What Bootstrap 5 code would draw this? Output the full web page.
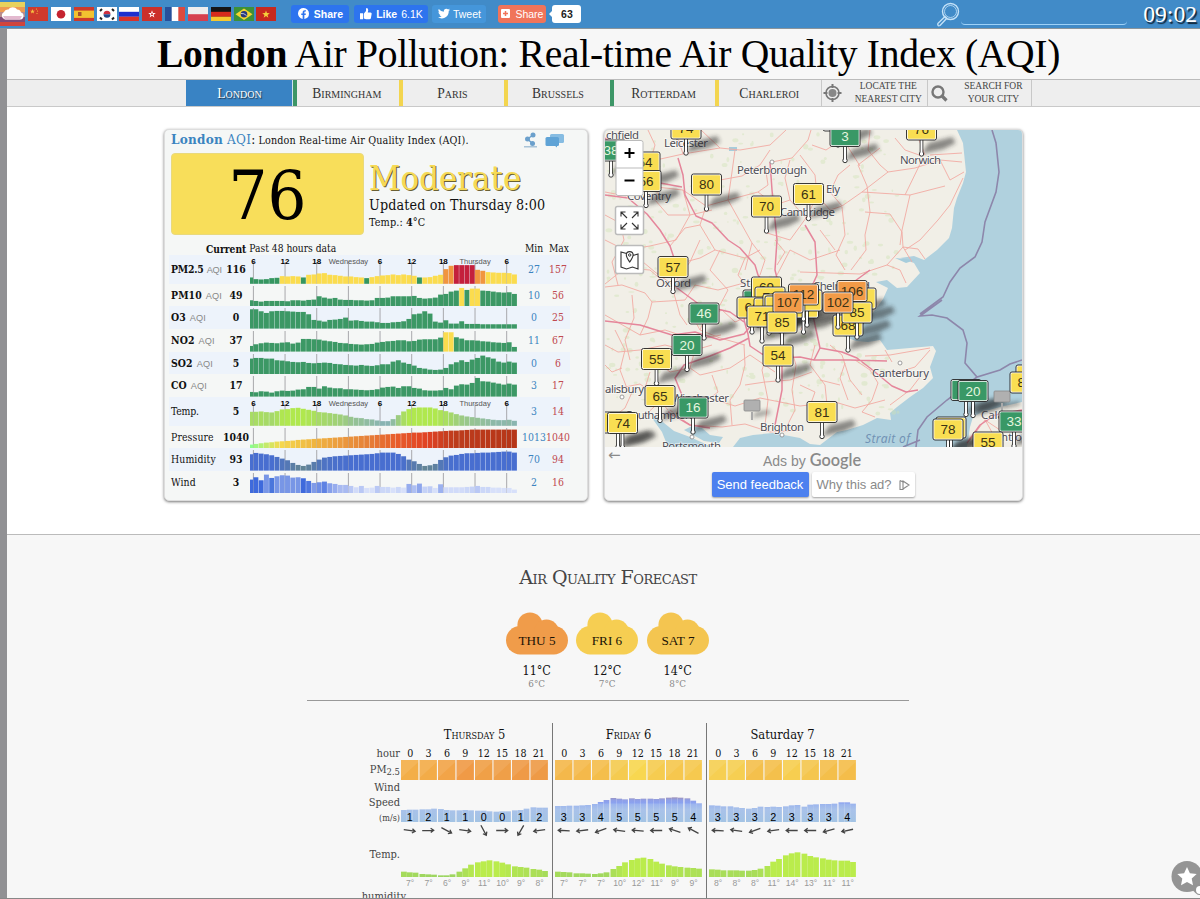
<!DOCTYPE html>
<html lang="en">
<head>
    <meta charset="UTF-8">
    <meta name="viewport" content="width=device-width, initial-scale=1.0">
    <title>London Air Pollution: Real-time Air Quality Index (AQI)</title>
    <!-- Bootstrap CSS -->
    <link href="https://cdn.jsdelivr.net/npm/bootstrap@5.3.0/dist/css/bootstrap.min.css" rel="stylesheet">
    <style>
        body { font-family: "DejaVu Serif Condensed", "DejaVu Serif", serif; font-stretch: condensed; height: 899px; overflow: hidden; background: #f7f7f7; color: #111; line-height: 1.2; font-size: 10px; }
        svg { display: block; flex: none; }
        .sans { font-family: "Liberation Sans", sans-serif; }
        .blue { color: #3b84c0; }
        .red { color: #c04a50; }

        /* top bar */
        .topbar { height: 29px; background: #418bc8; border-bottom: 1px solid #8a949b; }
        .flags { gap: 2.85px; padding-left: 3px; margin-right: 15px; }
        .social { height: 18px; margin-top: -1px; border-radius: 3px; color: #fff; font: 10.5px/18px "Liberation Sans", sans-serif; white-space: nowrap; display: flex; align-items: center; justify-content: center; gap: 4px; }
        .fb { width: 58px; background: #2d74ee; gap: 5px; }
        .fb-like { width: 74px; background: #2d74ee; margin-left: 5px; }
        .tw { width: 54px; background: #4596da; gap: 3px; margin-left: 4px; }
        .addthis { width: 48px; background: #f0745a; gap: 5px; margin-left: 12px; }
        .count63 { width: 29px; background: #fff; color: #222; position: relative; margin-left: 6px; }
        .count63::before { content: ""; position: absolute; left: -3px; top: 6px; border: 3px solid transparent; border-right-color: #fff; border-left: 0; }
        .searchbox { width: 166px; height: 22px; border-bottom: 1.5px solid #9fd2f8; border-radius: 0 0 4px 4px; }
        .clock { font: 23.6px/28px "Liberation Serif", serif; color: #fff; text-shadow: 1.5px 1.5px 1px #123; margin: 0 3px 0 16px; }

        /* title and city tabs */
        .page { border-left: 7px solid #919194; height: 870px; }
        .headline { font: 39.6px/50px "Liberation Serif", serif; letter-spacing: -.31px; color: #000; height: 50px; padding-left: 150px; white-space: nowrap; }
        .tabs { height: 28px; background: #eee; border-top: 1px solid #bbb; border-bottom: 1px solid #c9c9c9; padding-left: 179px; }
        .city { width: 105.6px; font: 13.6px/27px "Liberation Serif", serif; font-variant: small-caps; text-align: center; color: #333; border-left: 4px solid #f3d54f; padding-right: 2px; }
        .city.on { width: 107px; border: 0; border-right: 1px solid #cfe2ee; background: #3983c4; color: #fff; text-shadow: 1px 1px 1px #234; padding-left: 3px; }
        .city.good { border-left-color: #3d9667; }
        .tool { width: 105.6px; border-left: 1px solid #c8c8c8; font: 9.5px/13px "Liberation Serif", serif; color: #444; }
        .tool.last { border-right: 1px solid #c8c8c8; }

        /* city panel */
        .upper { height: 428px; background: #fff; border-bottom: 1px solid #bbb; padding: 22px 0 0 157px; gap: 16px; }
        .panel { height: 372px; border: 1px solid #ddd; border-radius: 5px; background: #f5f7f6; box-shadow: 0 1px 3px rgba(0, 0, 0, .55); overflow: hidden; }
        .aqi { width: 424px; padding: 1px 4px; }
        .aqi-head { height: 18px; padding-left: 2px; white-space: nowrap; }
        .aqi-name { font-size: 13.4px; letter-spacing: .25px; }
        .aqi-full { font-size: 10.7px; letter-spacing: .13px; padding-top: 2px; margin-left: 3px; }
        .chat { margin: 0 18px 0 7px; }
        .score-row { margin-top: 4px; }
        .score { width: 193px; height: 82px; margin-left: 2px; background: #f8de5a; border: 1px solid #e9d97c; border-radius: 4px; font-size: 68px; line-height: 84px; text-align: center; color: #000; }
        .summary { padding: 7px 0 0 5px; white-space: nowrap; }
        .level { font-size: 34px; line-height: 36px; color: #f6da55; text-shadow: 1px 1px 0 #6b6133; letter-spacing: .2px; }
        .updated { font-size: 14.2px; line-height: 18px; letter-spacing: .14px; }
        .now-temp { font-size: 10.8px; line-height: 18px; letter-spacing: .1px; }
        .measure-head { height: 20px; padding: 8px 14px 0 37px; font-size: 10.2px; white-space: nowrap; gap: 3px; }
        .measure { display: grid; grid-template-columns: 53px 28px 267px 5px 24px 24px; width: 401px; height: 22.6px; align-items: center; white-space: nowrap; font-size: 10.4px; }
        .measure.tall { height: 28.8px; }
        .measure:nth-child(odd) { background: #edf3fb; }
        .measure > span, .measure > b { display: flex; justify-content: center; }
        .measure > .what { justify-content: flex-start; padding-left: 2px; gap: 4px; align-items: baseline; letter-spacing: .1px; }
        .tall > .what { letter-spacing: -.2px; gap: 3px; }
        .what i { font: 9.2px "Liberation Sans", sans-serif; color: #888; }

        /* map panel */
        .mapcard { width: 419px; background: #f7f7f7; }
        .ads { height: 25px; line-height: 25px; color: #8a8a8a; font-size: 14px; padding-right: 3px; position: relative; }
        .ads-back { position: absolute; left: 3px; top: -4px; font: 15px/25px "DejaVu Sans", sans-serif; }
        .ads-brand { font: 600 16.3px/25px Lato, sans-serif; }
        .ad-row { gap: 3px; padding-right: 1px; }
        .adbtn { height: 25px; font: 13px/25px "Liberation Sans", sans-serif; border-radius: 2px; box-shadow: 0 1px 2px rgba(0, 0, 0, .35); white-space: nowrap; display: flex; align-items: center; justify-content: center; gap: 7px; }
        .adbtn.go { width: 97px; background: #4c80ef; color: #fff; }
        .adbtn.why { width: 103px; background: #fff; color: #8a8a8a; }

        /* forecast */
        .forecast-title { font: 19px/22px "DejaVu Serif", serif; font-stretch: normal; font-variant: small-caps; color: #444; padding: 31px 0 0 9px; letter-spacing: -.5px; }
        .clouds { gap: 8.5px; padding: 24px 0 0 7.5px; }
        .high { font-size: 12.4px; line-height: 15px; padding-top: 8px; }
        .low { font-size: 9.8px; line-height: 12px; color: #888; }
        .rule { width: 602px; border-top: 1.5px solid #999; margin: 10px 0 0 300px; }
        .days { padding: 22px 0 0 343px; height: 198px; }
        .labels { width: 50px; margin-right: -2.5px; text-align: right; color: #444; font-size: 11px; line-height: 15px; }
        .labels sub { font-size: 9.4px; }
        .label-hour { padding-top: 23px; }
        .label-pm { line-height: 20px; margin-top: -1px; }
        .label-unit { font-size: 9px; }
        .label-temp { padding-top: 20px; line-height: 18px; }
        .label-hum { padding-top: 25px; margin-right: -6px; }
        .day { width: 154px; border-left: 1px solid #777; padding-left: 2.5px; height: 178px; }
        .day:nth-child(2) { border-left-color: transparent; }
        .dayname { width: 147px; font-size: 12.8px; line-height: 23px; text-align: center; }
        .dayname.caps { font-variant: small-caps; }
        .hours { width: 147px; font-size: 10.6px; line-height: 14px; }
        .hours span { width: 18.4px; text-align: center; }
        .star { position: absolute; left: 1170px; top: 860px; }
        .edge { position: absolute; left: 0; top: 898px; width: 1200px; height: 1px; background: #888; }
    </style>
</head>
<body>
    <div class="topbar d-flex align-items-center">
        <svg width="25" height="24" viewBox="0 0 25 24">
            <path fill="#e8d25c" d="M0 0h25v5H0z"/><path fill="#ee9b52" d="M0 5h25v5H0z"/><path fill="#b98b8b" d="M0 10h25v5H0z"/><path fill="#804a77" d="M0 15h25v5H0z"/><path fill="#d0453c" d="M0 20h25v4H0z"/>
            <path fill="#fff" d="M5 17.500a4 4 0 0 1-1-7.500a4 4 0 0 1 4.500-2.500a5 5 0 0 1 8.500 0a4 4 0 0 1 4 3a3.600 3.600 0 0 1-.5 7z"/><path fill="#e3b9cf" d="M3 14h19l-2 3.500H5z"/>
        </svg>
        <div class="flags d-flex" id="flags"></div>
        <div class="social fb fw-bold">
            <svg width="11" height="11" viewBox="0 0 16 16"><path fill="#fff" d="M16 8a8 8 0 1 0-9.250 7.900v-5.590H4.700V8h2.050V6.240c0-2 1.200-3.130 3.020-3.130.88 0 1.800.16 1.800.16v1.980h-1c-1 0-1.320.62-1.320 1.260V8h2.240l-.36 2.310H9.250v5.590A8 8 0 0 0 16 8"/></svg>Share</div>
        <div class="social fb-like">
            <svg width="12" height="12" viewBox="0 0 16 16"><path fill="#fff" d="M0 7h4v8H0zM5 7.500L8 4V1.200Q8 0 9.200 0Q11 .3 11 3L10.300 6H14Q16 6.200 15.500 8L14.500 13.500Q14 15 12.500 15H8L5 14z"/></svg><b>Like</b>6.1K</div>
        <div class="social tw">
            <svg width="12" height="11" viewBox="0 0 16 14"><path fill="#fff" d="M5 13.500c6 0 9.300-5 9.300-9.300v-.4A6.700 6.700 0 0 0 16 2.100a6.500 6.500 0 0 1-1.900.5A3.300 3.300 0 0 0 15.600.8a6.600 6.600 0 0 1-2.100.8A3.300 3.300 0 0 0 7.900 4.600 9.300 9.300 0 0 1 1.100 1.100a3.300 3.300 0 0 0 1 4.400A3.200 3.200 0 0 1 .6 5.100a3.300 3.300 0 0 0 2.600 3.300 3.200 3.200 0 0 1-1.400 0 3.300 3.300 0 0 0 3 2.300A6.600 6.600 0 0 1 0 12.100a9.300 9.300 0 0 0 5 1.400"/></svg>Tweet</div>
        <div class="social addthis">
            <svg width="9" height="9" viewBox="0 0 9 9"><rect width="9" height="9" rx="1" fill="#fff"/><path stroke="#f0745a" stroke-width="1.500" d="M4.500 2v5M2 4.500h5"/></svg>Share</div>
        <div class="social count63 fw-bold">63</div>
        <svg class="ms-auto" width="26" height="25" viewBox="0 0 26 25" fill="none" stroke="#c4e2f8" stroke-width="1.400"><circle cx="15.500" cy="9.500" r="8"/><circle cx="15.500" cy="9.500" r="6" stroke-width=".8"/><path d="M10 14.500l1.800 1.800L5 23.500q-1.500.8-2-.2t0-2z"/></svg>
        <div class="searchbox"></div>
        <div class="clock">09:02</div>
    </div>

    <div class="page">
        <div class="headline"><b>London</b> Air Pollution: Real-time Air Quality Index (AQI)</div>
        <div class="tabs d-flex">
            <div class="city on">London</div>
            <div class="city good">Birmingham</div>
            <div class="city">Paris</div>
            <div class="city">Brussels</div>
            <div class="city good">Rotterdam</div>
            <div class="city">Charleroi</div>
            <div class="tool d-flex align-items-center">
                <svg width="20" height="20" viewBox="0 0 20 20"><g fill="none" stroke="#777"><circle cx="10.500" cy="10" r="6.500" stroke-width="1.600"/><path stroke-width="2" d="M10.500 1v4M10.500 15v4M1.500 10h4M15.500 10h4"/></g><circle cx="10.500" cy="10" r="4" fill="#888"/></svg>
                <div class="flex-grow-1 text-center ps-2">LOCATE THE<br>NEAREST CITY</div>
            </div>
            <div class="tool last d-flex align-items-center">
                <svg width="20" height="20" viewBox="0 0 20 20" fill="none" stroke="#777"><circle cx="10" cy="9" r="5.500" stroke-width="2.400"/><path d="M14 13l4.500 4.500" stroke-width="3.200"/></svg>
                <div class="flex-grow-1 text-center ps-2">SEARCH FOR<br>YOUR CITY</div>
            </div>
        </div>

        <div class="upper d-flex">
            <div class="panel aqi">
                <div class="aqi-head d-flex align-items-center">
                    <span class="aqi-name"><span class="blue"><b>London</b> AQI</span>:</span>
                    <span class="aqi-full">London Real-time Air Quality Index (AQI).</span>
                    <svg class="ms-auto" width="15" height="16" viewBox="0 0 15 16" fill="#6ba0cc"><path d="M1 14h13v1.500H1z" fill="#a9c4d8"/><circle cx="10" cy="3" r="2.500"/><circle cx="4.500" cy="7" r="2.500"/><circle cx="9.500" cy="11.500" r="2.500"/><path d="M4.500 7L10 3M4.500 7l5 4.500" stroke="#6ba0cc" stroke-width="1.500"/></svg>
                    <svg class="chat" width="20" height="15" viewBox="0 0 20 15"><rect x="5" y="1" width="14" height="9" rx="1.500" fill="#86bce2"/><rect x=".5" y="4" width="13.500" height="9" rx="1.500" fill="#5fa3d6"/><path d="M9 12l3 2.500V12z" fill="#5fa3d6"/></svg>
                </div>
                <div class="score-row d-flex">
                    <div class="score">76</div>
                    <div class="summary">
                        <div class="level">Moderate</div>
                        <div class="updated">Updated on Thursday 8:00</div>
                        <div class="now-temp">Temp.: <b>4</b>°C</div>
                    </div>
                </div>
                <div class="measure-head d-flex"><b>Current</b><span>Past 48 hours data</span><span class="ms-auto">Min&nbsp; Max</span></div>
                <div id="measures"></div>
            </div>

            <div class="panel mapcard">
                <svg id="map" width="417" height="317" viewBox="605 130 417 317" font-family="Noto Sans, sans-serif">
                    <defs><filter id="soft" x="-30%" y="-60%" width="160%" height="220%"><feGaussianBlur stdDeviation="2"/></filter></defs>
                    <rect x="605" y="130" width="417" height="317" fill="#b0d1de"/>
                    <path fill="#f1efe7" d="M605 130H957L963 143 966 172 963 183 957 198 954 208 952 228 949 238 937 250 924 260 914 256 900 258 914 263 920 273 907 287 897 288 887 280 876 282 888 288 883 299 872 314 866 322 850 330 838 334 856 341 868 342 880 340 887 350 910 348 933 346 936 351 930 367 933 378 923 388 910 397 897 407 890 413 891 420 877 418 863 425 847 430 837 432 820 445 810 444 800 438 773 433 753 435 740 438 733 447H712L690 437 674 431 664 423 655 415 652 418 662 432 668 447H605z"/>
                    <path fill="#f1efe7" d="M1022 402L1000 407 982 412 973 417 970 427 967 447H1022z"/>
                    <path fill="#b0d1de" d="M684 430l8-4 10 2 8 7 13 2-4 6-15-2z"/>
                    <g id="woods" fill="#cfe3b5" opacity=".42"></g>
                    <path fill="#a6cddc" d="M729 147h8v4h-8zM895 258l20 2-9 3z"/>
                    <g fill="none" stroke="#f2aaa3" stroke-width=".9" stroke-linejoin="round">
                        <path d="M605 146L623 159 647 162 683 154 720 148 740 150M683 154L676 132M720 148L701 130M740 150L770 145 786 130M770 150L760 165 742 176 720 180M772 162L792 158 808 140 811 130"/>
                        <path d="M605 192L626 196 648 186 683 190 706 206 728 200 758 192 775 205M683 190L690 215 676 240 650 246 625 250 605 240M706 206L700 225 715 250 745 258 760 250M728 200L742 225 752 243 745 270"/>
                        <path d="M767 233L790 240 806 218M806 218L790 200 775 205M806 218L830 210 842 206 862 192 888 172 915 168 940 160 962 162M867 186L870 212 865 235 866 250 851 270M867 186L858 165 880 148M862 192L910 195 945 186M910 195L902 230 900 245M905 195L922 160M940 160L950 180 964 172M930 155L962 153M963 178L950 205 938 220 920 240 905 250M915 130L925 155"/>
                        <path d="M865 212L890 214 902 232 903 247 887 265 860 274 830 273 800 272M903 247L918 249 925 259M887 265L900 270 906 283M903 247L912 262M812 145L826 150 838 142M800 155L815 175 817 195 830 210M835 130L848 147 860 166M842 206L830 192 838 175 850 165M845 270L836 255 845 235 842 207"/>
                        <path d="M605 287L622 285 645 293 652 302 685 300 695 285 718 290 744 283M605 315L640 335 665 330 695 340 721 335M673 290L650 270 625 268 605 284M673 290L680 315 687 325M615 330L625 350 620 370 628 391M605 391L640 384 655 395 668 410M632 295L634 318 625 340 630 360"/>
                        <path d="M690 312L700 330 720 338 745 345M640 350L665 345 685 350M744 345L745 365 740 385 730 400 732 425M770 346L762 370 768 400 765 425M790 345L796 365 792 390 795 410 785 430M815 345L810 365 825 385 827 405M830 345L842 355 850 380 862 395M700 375L730 368 750 355 775 372M680 400L710 398 735 406 760 398 800 406 835 402 855 408 885 400M670 410L690 425 722 427 745 424 770 432 800 430"/>
                        <path d="M855 360L870 370 878 383 872 400 862 412 875 417M865 356L890 355 930 348M892 374L915 367 930 350M892 362L885 350M920 377L910 390 890 405M840 385L820 380M845 363L840 378 848 400"/>
                        <path d="M610 420L625 408 633 390M640 420L655 406M970 440L985 420 1000 430 1022 425M982 414L995 438M800 330L810 315 822 300 845 293M700 240L690 262 673 285M720 250L710 270 728 290 720 305M752 243L765 260 760 275M777 275L790 250 810 260 840 250M820 230L835 250"/>
                        <path d="M605 215L618 222 632 212 645 214M620 222L624 240 612 262 618 285M648 130L655 145 650 162M660 183L655 200 668 215 690 215M690 215L712 210M735 150L732 172 728 200M765 165L768 185 758 192M700 225L685 228 670 246M640 246L643 262 655 272 673 285M685 262L700 258 715 250M745 258L738 275 744 283M775 240L785 252 777 265M806 218L815 200 812 185M790 160L785 178 790 200"/>
                        <path d="M605 345L618 352 640 350M640 335L648 318 652 302M655 360L670 372 690 368 700 375M690 368L695 350 712 345M712 375L718 392 710 398M745 385L765 382 790 380 812 372M800 385L815 392 810 406M650 372L645 388M722 310L735 322 744 318M700 330L705 318 722 310M605 365L612 372 622 368M870 130L868 150 880 165 888 172M895 138L905 150 922 156"/>
                    </g>
                    <g fill="none" stroke="#e5869b" stroke-width="1.500" stroke-linejoin="round">
                        <path d="M605 195L628 198 647 214 660 230 670 246 674 258M640 181L660 183 682 187M605 138L623 151 635 153M678 158L683 175 685 195 696 216 712 223 728 240 740 248 755 265 758 275 766 285 770 305"/>
                        <path d="M770 162L772 190 777 240 775 270 780 290M805 225L815 242 817 275 808 295M605 321L640 325 672 335 695 332 720 340 744 334 754 322M673 285L700 305 730 312 744 322M684 400L675 378 684 365 710 356 730 348 749 338M668 412L690 425 710 428"/>
                        <path d="M744 320L748 334 750 346 762 354 780 358 800 357 814 360 820 348 815 325 812 310 798 296 770 290 752 298 744 320M814 360L850 360 887 361M820 348L842 352 857 358 870 368 892 386 906 392 918 390M782 360L782 390 775 425M967 443L980 425 995 415 1022 410M800 295L840 292 870 270"/>
                    </g>
                    <g fill="none" stroke="#8d87ab" stroke-width="1.600"><path d="M992 130L996 143 999 172 996 192 985 222 982 242 975 257 960 268 950 282 943 297 920 314M942 300L920 316 932 315 947 318 963 330 967 343 965 363 977 377 1000 370 1010 364 1022 360M977 377L947 400 927 417 918 430 916 447M903 447L920 440"/></g>
                    <g fill="#4e4e56" font-size="11.400" stroke="#fff" stroke-width="1.600" stroke-opacity=".6" paint-order="stroke">
                        <text x="606" y="139" textLength="33">chfield</text><text x="664" y="147" textLength="44">Leicester</text><text x="900" y="164" textLength="41">Norwich</text>
                        <text x="737" y="174" textLength="70">Peterborough</text><text x="826" y="193" textLength="14">Ely</text><text x="780" y="216" textLength="55">Cambridge</text>
                        <text x="627" y="200" textLength="44">Coventry</text><text x="656" y="287" textLength="35">Oxford</text><text x="740" y="287">St</text><text x="813" y="290" textLength="57">Chelmsford</text>
                        <text x="605" y="393" textLength="39">alisbury</text><text x="672" y="402" textLength="57">Winchester</text><text x="626" y="419" textLength="66">Southampton</text><text x="662" y="450" textLength="59">Portsmouth</text>
                        <text x="760" y="431" textLength="44">Brighton</text><text x="872" y="377" textLength="57">Canterbury</text><text x="981" y="419">Calais</text><text x="1001" y="441">ntiop</text>
                    </g>
                    <text x="865" y="443" fill="#7293b5" font-size="12" font-style="italic" textLength="45">Strait of</text>
                    <g fill="#fff" stroke="#888" stroke-width=".8"><circle cx="772" cy="162" r="2"/><circle cx="622" cy="397" r="2"/><circle cx="900" cy="363" r="2"/><circle cx="782" cy="435" r="2"/><circle cx="692" cy="437" r="2"/></g>
                    <g id="pins" font-family="Liberation Sans, sans-serif" font-size="13.500" text-anchor="middle"></g>
                    <g fill="#fff" stroke="#bbb"><rect x="616" y="140.500" width="27" height="55" rx="2"/><path d="M616 168h27"/><g stroke-width="1.500"><rect x="615.500" y="206.500" width="28" height="28" rx="2"/><rect x="615.500" y="245.500" width="28" height="28" rx="2"/></g></g>
                    <path d="M624.500 153h10M629.500 148v10M624.500 180.500h10" stroke="#000" stroke-width="2"/>
                    <path d="M627 218l-6-6m0 4.500v-4.500h4.500M632 218l6-6m-4.500 0h4.500v4.500M627 223l-6 6m0-4.500v4.500h4.500M632 223l6 6m-4.500 0h4.500v-4.500" fill="none" stroke="#333" stroke-width="1.100"/>
                    <path d="M626.500 253.500l-5.500-1.500v15l5.500 2 6-2 5.500 2v-15l-5 1.500M629.700 262c-2-3-3.400-5-3.400-7a3.400 3.400 0 0 1 6.800 0c0 2-1.400 4-3.400 7z" fill="none" stroke="#333" stroke-width="1.100"/><circle cx="629.700" cy="255" r="1.200" fill="none" stroke="#333"/>
                </svg>
                <div class="ads sans text-center"><span class="ads-back">←</span>Ads by <span class="ads-brand">Google</span></div>
                <div class="ad-row d-flex justify-content-center">
                    <div class="adbtn go">Send feedback</div>
                    <div class="adbtn why">Why this ad? <svg width="11" height="10" viewBox="0 0 11 10"><path d="M4 1L10 5 4 9zM1 .5v9h3V7.500M1 .5L4 2" fill="none" stroke="#888" stroke-width="1.100"/></svg></div>
                </div>
            </div>
        </div>

        <div class="forecast-title text-center">Air Quality Forecast</div>
        <div class="clouds d-flex justify-content-center" id="clouds"></div>
        <div class="rule"></div>
        <div class="days d-flex" id="days">
            <div class="labels">
                <div class="label-hour">hour</div>
                <div class="label-pm">PM<sub>2.5</sub></div>
                <div>Wind<br>Speed<br><span class="label-unit">(m/s)</span></div>
                <div class="label-temp">Temp.</div>
                <div class="label-hum">humidity</div>
            </div>
        </div>
    </div>
    <svg class="star" width="30" height="38" viewBox="1170 860 30 38"><circle cx="1187" cy="876.500" r="15.500" fill="#949494"/><path d="M1191 888q6 8 9 7v-12z" fill="#949494"/><circle cx="1200" cy="890" r="4" fill="#fff"/><path fill="#fff" d="M1187 867l2.900 6.200 6.800.8-5 4.600 1.300 6.700-6-3.300-6 3.300 1.300-6.700-5-4.600 6.800-.8z"/></svg>
    <div class="edge"></div>

    <!-- Bootstrap JS -->
    <script src="https://cdn.jsdelivr.net/npm/bootstrap@5.3.0/dist/js/bootstrap.bundle.min.js"></script>
    <script>
        const star = (x, y, r, c) => {
            let p = '';
            for (let i = 0; i < 10; i++) {
                const a = -Math.PI / 2 + i * Math.PI / 5, k = i % 2 ? r * .4 : r;
                p += (x + k * Math.cos(a)).toFixed(2) + ',' + (y + k * Math.sin(a)).toFixed(2) + ' ';
            }
            return `<polygon points="${p}" fill="${c}"/>`;
        };
        const bg = c => `<rect width="20" height="14.500" fill="${c}"/>`;
        const bands = (a, b, c) => bg(a) + `<path d="M0 4.800h20v5H0z" fill="${b}"/><path d="M0 9.700h20v4.800H0z" fill="${c}"/>`;
        const flags = [
            bg('#cf3a2b') + star(4.5, 4.5, 2.6, '#f5c342') + '<g fill="#f5c342"><circle cx="8.500" cy="2" r=".6"/><circle cx="9.500" cy="4" r=".6"/><circle cx="9" cy="6.500" r=".6"/></g>',
            bg('#fff') + '<circle cx="10" cy="7.200" r="4.300" fill="#c5232f"/>',
            bg('#cc3a2b') + '<path d="M0 3.600h20v7.300H0z" fill="#f2c230"/><path d="M4 5h3.500v4H4z" fill="#a8532d"/>',
            bg('#fff') + '<path d="M6.500 7.200a3.500 3.500 0 0 1 7 0z" fill="#cd3040"/><path d="M6.500 7.200a3.500 3.500 0 0 0 7 0z" fill="#22488c"/><path d="M3 4l2-2M15 2l2 2M3 10.500l2 2M17 10.500l-2 2" stroke="#222" stroke-width="2"/>',
            bands('#fff', '#1c2fd0', '#d9322a'),
            bg('#cc3029') + star(10, 7.2, 4, '#fff') + '<circle cx="10" cy="7.200" r="1" fill="#cc3029"/>',
            bg('#fff') + '<path d="M0 0h6.700v14.500H0z" fill="#27509b"/><path d="M13.300 0H20v14.500h-6.700z" fill="#dd4a3e"/>',
            bg('#eee') + '<path d="M0 7.200h20v7.300H0z" fill="#d6404e"/>',
            bands('#151515', '#d62b1c', '#f6c82f'),
            bg('#3d9138') + '<path d="M10 1.500L18.500 7.200 10 13 1.500 7.200z" fill="#f4d52f"/><circle cx="10" cy="7.200" r="3.300" fill="#27397c"/><path d="M7 6.500q3-.5 5.500 2" stroke="#fff" stroke-width=".7" fill="none"/>',
            bg('#c7291f') + star(10, 7.4, 4, '#f6d13a')
        ];
        document.getElementById('flags').innerHTML = flags.map(f => `<svg width="20" height="14.500">${f}</svg>`).join('');

        // bar heights are in thirds of a pixel
        const measures = [
            ['PM2.5', 116, 27, 157, [19,14,13,14,17,18,23,22,23,22,19,27,28,31,32,27,26,24,22,22,20,19,17,20,23,25,26,28,26,28,26,24,19,19,20,24,27,44,54,56,56,56,56,42,39,35,34,33,33,32,28]],
            ['PM10', 49, 10, 56, [19,17,15,17,17,17,17,16,19,19,18,20,21,31,27,24,26,21,20,20,19,19,18,19,26,26,27,31,31,31,31,32,26,24,25,27,36,38,45,48,56,50,54,54,48,47,45,43,42,43,38]],
            ['O3', 0, 0, 25, [58,58,52,47,52,53,53,52,51,50,50,43,26,24,21,26,27,29,33,24,25,23,21,21,19,17,17,19,20,22,29,43,45,52,45,21,18,25,15,15,22,14,14,14,13,13,13,13,13,13,13]],
            ['NO2', 37, 11, 67, [17,22,25,27,26,25,27,28,24,27,38,38,37,36,33,31,29,26,25,23,22,21,22,23,27,29,31,32,34,34,31,32,36,37,37,37,42,58,58,43,39,34,34,33,31,30,28,27,26,28,14]],
            ['SO2', 5, 0, 6, [48,50,50,48,48,43,42,40,38,37,38,35,34,35,36,35,32,31,29,28,27,29,27,26,28,31,31,39,43,36,32,27,20,18,15,14,15,20,31,37,43,38,45,50,57,52,48,39,36,39,36]],
            ['CO', 17, 3, 17, [14,13,16,15,12,16,18,17,18,21,22,29,29,24,31,27,25,25,22,22,21,20,19,20,22,27,29,30,26,31,31,26,24,19,18,18,19,26,22,33,37,36,41,56,46,45,42,39,36,39,36]],
            ['Temp.', 5, 3, 14, [42,42,43,41,40,44,49,50,53,54,51,48,45,41,40,38,36,34,31,27,24,23,20,19,16,14,14,20,32,43,50,54,55,55,55,52,47,44,40,35,31,28,26,24,22,20,18,17,17,18,15]],
            ['Pressure', 1040, 1013, 1040, Array.from({length: 51}, (_, i) => i < 42 ? 12 + Math.round(45 * Math.pow(i / 42, .78)) : 57)],
            ['Humidity', 93, 70, 94, [49,53,51,49,46,41,36,31,23,17,14,18,26,33,39,41,43,44,45,46,47,48,49,50,52,54,54,54,50,43,33,28,20,14,16,20,32,40,45,47,50,52,52,53,54,54,55,56,57,57,54]],
            ['Wind', 3, 2, 16, [42,49,40,57,47,52,55,54,48,49,46,38,32,34,36,31,29,26,26,23,19,23,17,18,23,20,20,18,20,18,29,25,30,21,22,17,28,19,19,19,19,20,21,23,20,20,18,18,17,17,12]]
        ];
        const mix = (stops, t) => {
            const p = Math.max(0, Math.min(.9999, t)) * (stops.length - 1), k = Math.floor(p), f = p - k;
            return 'rgb(' + stops[k].map((v, j) => Math.round(v + (stops[k + 1][j] - v) * f)).join(',') + ')';
        };
        const barColor = (row, i, h) => {
            if (row === 0) {
                if (i < 6 || i === 10 || i === 22 || i === 32) return '#359660';
                if (i > 38 && i < 43) return '#c4203c';
                return i > 36 && i < 45 ? '#f1953f' : '#fbdc4e';
            }
            if (row === 1 && (i === 40 || i === 42 || i === 43) || row === 3 && (i === 37 || i === 38)) return '#fbdc4e';
            if (row < 6) return '#3c9865';
            if (row === 6) return mix([[137, 180, 178], [157, 204, 128], [176, 232, 78]], (h - 14) / 36);
            if (row === 7) return mix([[140, 255, 140], [245, 217, 78], [240, 186, 66], [236, 157, 62], [230, 128, 56], [232, 92, 42], [225, 66, 36], [188, 60, 28], [186, 56, 26], [182, 54, 24]], i / 50);
            if (row === 8) return mix([[98, 132, 150], [72, 110, 208]], (h - 14) / 32);
            return i < 10 && i > 2 ? (i === 4 ? '#4a76dc' : '#7896e6') : mix([[215, 224, 250], [150, 172, 238], [62, 106, 220]], (h - 18) / 22);
        };
        document.getElementById('measures').innerHTML = measures.map(([name, now, min, max, bars], row) => {
            const tall = row === 0 || row === 6, H = tall ? 28.8 : 22.6;
            let g = '';
            for (let t = 0; t < 9; t++) g += `<path d="M${3.4 + t * 31.66} ${tall ? 7 : 2}V${H}" stroke="#a8a8ac"/>`;
            bars.forEach((h, i) => {
                const x = i ? 3.4 + (i - 1) * 5.277 : 0, w = i ? 5.277 : 3.4;
                g += `<rect x="${x}" y="${H - h / 3}" width="${w - .35}" height="${h / 3}" fill="${barColor(row, i, h)}"/>`;
            });
            if (tall) ['6', '12', '18', 'Wednesday', '6', '12', '18', 'Thursday', '6'].forEach((s, t) => {
                g += `<text x="${3.4 + t * 31.66}" y="8.500" text-anchor="middle" font-family="Liberation Sans" font-size="${s.length > 2 ? 7.5 : 8}" ${s.length > 2 ? 'fill="#555"' : 'font-weight="bold"'}>${s}</text>`;
            });
            const label = row < 6 ? `<b>${name}</b><i>AQI</i>` : name;
            return `<div class="measure ${tall ? 'tall' : ''}"><span class="what">${label}</span><b>${now}</b><svg width="267" height="${H}">${g}</svg><span></span><span class="blue">${min}</span><span class="red">${max}</span></div>`;
        }).join('');

        // map pins: centre x, top y, value, colour
        const Y = '#f9de52', G = '#399866', O = '#f29b48';
        const pins = [
            [686,118,74,Y],[921.5,119,76,Y],[838,110,'',G],[845,125.5,3,G],[611,140,38,G],[645,152,54,Y],[646,170.5,56,Y],[706.5,174,80,Y],[766.5,196,70,Y],[808.5,183.5,61,Y],[673,256.5,57,Y],[704,303,46,G],
            [758,290,'',G],[766.5,277,69,Y],[861,288,'',Y],[770,287,72,Y],[752,297,66,Y],[769,298,'',Y],[778,294,'',Y],[780,296,8,Y],[803.5,297,50,Y],[807,290,'',Y],[762,306,71,Y],
            [803.5,284,112,O],[788,292,107,O],[852,280.5,106,O],[782,312,85,Y],[848,315,68,Y],[857,302,85,Y],[838,292,102,O],[778,345,54,Y],
            [687,334.5,20,G],[656.5,348.5,55,Y],[660,385.5,65,Y],[693,397,16,G],[618,412,'',Y],[622.5,412.5,74,Y],[752,400,'','#aaa'],[822,401.5,81,Y],[966,379.5,'',G],[973,380.5,20,G],[1002,391,'','#aaa'],
            [1031,365,'',Y],[1025,372,84,Y],[951,417,'',Y],[948,419,78,Y],[1014,411,33,G],[988,432,55,Y]
        ];
        document.getElementById('pins').innerHTML = pins.map(([x, y, v, c]) =>
            c === '#aaa' ? `<path d="M${x} ${y + 18}l4-6 14-2v4z" fill="#222" opacity=".4" filter="url(#soft)"/>` :
            `<path d="M${x} ${y + 35}l7-11 24-6 3 6-12 6z" fill="#222" opacity=".5" filter="url(#soft)"/>`).join('') + pins.map(([x, y, v, c]) => {
            if (c === '#aaa') return `<path d="M${x} ${y + 12}v8" stroke="#aaa" stroke-width="2"/><rect x="${x - 8}" y="${y}" width="16" height="11" rx="1" fill="#b0b0b0" stroke="#8c8c8c" stroke-width=".8"/>`;
            return `<path d="M${x} ${y + 21}v14" stroke="#222" stroke-width="3.600"/><circle cx="${x}" cy="${y + 35}" r="2.200" fill="#fff" stroke="#222" stroke-width=".9"/><path d="M${x} ${y + 20}v15" stroke="#fff" stroke-width="2"/>` +
                `<rect x="${x - 15}" y="${y}" width="30" height="21" rx="2" fill="#fff" stroke="#222" stroke-width=".9"/><rect x="${x - 13.7}" y="${y + 1.2}" width="27.400" height="18.600" rx="1" fill="${c}"/>` +
                `<text x="${x}" y="${y + 15}" fill="${c === G ? '#e4f6df' : '#3a3215'}">${v}</text>`;
        }).join('');

        // woodland specks
        let seed = 7, specks = '';
        const rnd = () => (seed = seed * 16807 % 2147483647) / 2147483647;
        for (let i = 0; i < 420; i++) {
            const x = 608 + rnd() * 290, y = 134 + rnd() * 280;
            if (x > 850 && y > 275 && y < 352) continue;
            specks += `<ellipse cx="${x.toFixed(1)}" cy="${y.toFixed(1)}" rx="${(.8 + rnd() * 2.6).toFixed(1)}" ry="${(.8 + rnd() * 1.8).toFixed(1)}"/>`;
        }
        document.getElementById('woods').innerHTML = specks;

        document.getElementById('clouds').innerHTML = [['THU 5', '#f09c4a', 11, 6], ['FRI 6', '#f6ce52', 12, 7], ['SAT 7', '#f4c550', 14, 8]].map(([d, c, hi, lo]) =>
            `<div class="text-center"><svg width="62" height="43" viewBox="0 0 62 43"><g fill="${c}"><rect y="14" width="62" height="28.500" rx="14.200"/><circle cx="24" cy="13" r="12.600"/><circle cx="40.500" cy="20" r="12.500"/></g><text x="31" y="33" text-anchor="middle" font-family="Liberation Serif" font-size="13.200" fill="#1a1205">${d}</text></svg>` +
            `<div class="high">${hi}°C</div><div class="low">${lo}°C</div></div>`).join('');

        const days = [
            { name: 'Thursday 5', caps: true,
              pm: ['#f3ae48', '#f3ac48', '#f2a448', '#f09a46', '#f0a047', '#ef9f48', '#ef9a47', '#ee9a46'],
              wind: [36,37,37,38,38,40,39,36,35,35,36,35,34,34,32,31,32,32,35,36,40,44,43,43], speed: [1,2,1,1,0,0,1,2], dir: [8,-2,28,8,62,0,120,172],
              temp: [16,14,13,9,8,7,5,5,8,16,26,37,44,47,50,47,43,38,32,30,28,24,22,18], deg: [7,7,6,9,11,10,9,8] },
            { name: 'Friday 6', caps: true,
              pm: ['#f4b84b', '#f4b94b', '#f4be4c', '#f5cb50', '#f8d750', '#f6cc50', '#f6c74e', '#f6c94f'],
              wind: [48,48,49,49,50,51,54,60,66,72,70,68,71,69,70,70,69,71,73,74,73,71,64,56], speed: [3,3,4,5,5,5,5,4], dir: [183,173,160,188,185,180,198,208],
              temp: [16,15,14,11,11,10,9,11,14,24,33,44,51,56,58,54,46,40,35,32,30,28,27,25], deg: [7,7,7,10,12,11,9,9] },
            { name: 'Saturday 7', caps: false,
              pm: ['#f6cf52', '#f6cf52', '#f4c04c', '#f4c04c', '#f7ce50', '#f5c64e', '#f4bf4b', '#f4bd4a'],
              wind: [50,49,47,47,44,42,40,42,46,45,46,45,47,50,51,46,52,53,54,54,55,59,59,55], speed: [3,3,3,2,3,3,3,4], dir: [183,188,160,172,180,180,165,168],
              temp: [23,22,20,20,20,19,19,21,25,33,46,54,65,71,74,70,63,59,56,52,50,49,49,45], deg: [8,8,8,11,14,13,11,11] }
        ];
        days.forEach((d, n) => {
            let g = `<defs><linearGradient id="w${n}" gradientUnits="userSpaceOnUse" x1="0" y1="62" x2="0" y2="37"><stop offset="0" stop-color="#a3c3e4"/><stop offset=".5" stop-color="#a9c2ea"/><stop offset=".72" stop-color="#9bb4ee"/><stop offset=".76" stop-color="#8ba2f0"/><stop offset=".88" stop-color="#8f9fe6"/><stop offset="1" stop-color="#a090b4"/></linearGradient></defs>`;
            d.pm.forEach((c, i) => {
                const x = i * 18.5;
                g += `<rect x="${x}" y="0" width="17.400" height="20" fill="${c}"/><path d="M${x} 18L${x + 17.4} 2V0H${x}z" fill="#fff" opacity=".09"/>`;
            });
            for (let i = 0; i < 24; i++) {
                const x = Math.floor(i / 3) * 18.5 + i % 3 * 5.8, w = d.wind[i] / 3, t = d.temp[i] / 3;
                g += `<rect x="${x}" y="${62 - w}" width="5.800" height="${w}" fill="url(#w${n})"/><rect x="${x}" y="${117 - t}" width="5.800" height="${t}" fill="${mix([[152, 210, 100], [170, 222, 88], [186, 236, 76]], t / 15)}"/>`;
            }
            for (let i = 0; i < 8; i++) {
                const x = i * 18.5 + 8.7;
                g += `<text x="${x}" y="60.500" text-anchor="middle" font-size="10.800" fill="#000">${d.speed[i]}</text><text x="${x + .5}" y="126" text-anchor="middle" font-size="8.600" fill="#999">${d.deg[i]}°</text>` +
                    `<path transform="translate(${x} 70.500) rotate(${d.dir[i]})" d="M-6 0H5M2.500-2.200L5.500 0 2.500 2.200" fill="none" stroke="#444" stroke-width="1.300"/>`;
            }
            const hours = [0, 3, 6, 9, 12, 15, 18, 21].map(h => `<span>${h}</span>`).join('');
            document.getElementById('days').insertAdjacentHTML('beforeend',
                `<div class="day"><div class="dayname ${d.caps ? 'caps' : ''}">${d.name}</div><div class="hours d-flex">${hours}</div><svg width="148" height="130" font-family="Liberation Sans">${g}</svg></div>`);
        });
    </script>
</body>
</html>
